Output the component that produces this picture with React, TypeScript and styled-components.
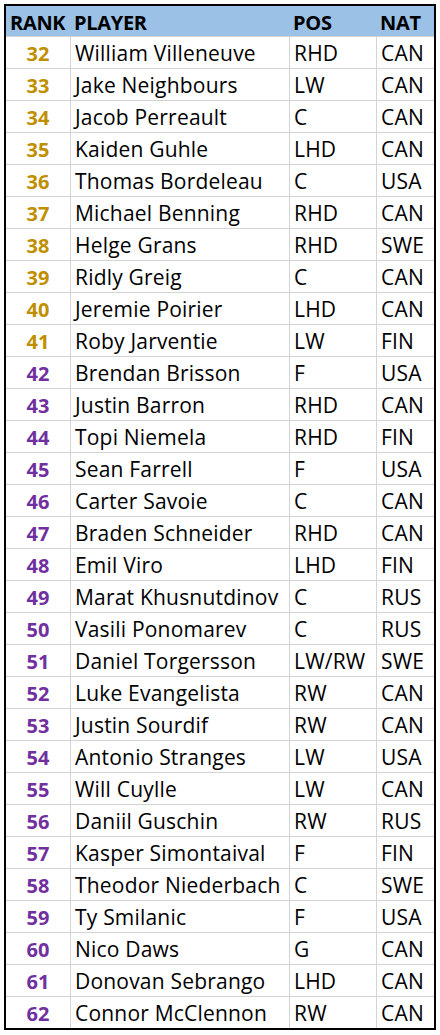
import React from 'react';
import styled, { createGlobalStyle } from 'styled-components';

const GlobalStyle = createGlobalStyle`
  html, body {
    margin: 0;
    padding: 0;
    background: #ffffff;
  }
  body {
    font-family: "Open Sans", "Liberation Sans", sans-serif;
  }
`;

// Excel-like sheet wrapper
const Page = styled.div`
  padding: 4px;
`;

const Sheet = styled.div`
  width: 428px;
  border: 2px solid #000;
`;

const Row = styled.div<{ header?: boolean }>`
  display: grid;
  grid-template-columns: 64px 219px 87px 58px;
  height: ${({ header }) => (header ? '30px' : '32px')};
  box-sizing: border-box;
  background: ${({ header }) => (header ? '#9bc2e6' : '#fff')};
  border-top: ${({ header }) => (header ? 'none' : '1px solid #d4d4d4')};
`;

const Cell = styled.div<{ divider?: boolean }>`
  box-sizing: border-box;
  display: flex;
  align-items: flex-end;
  padding: 0 0 4px 4px;
  border-left: ${({ divider }) => (divider ? '1px solid #d4d4d4' : 'none')};
  font-size: 21px;
  line-height: 1;
  letter-spacing: 0.2px;
  color: #000;
  white-space: nowrap;
  overflow: hidden;
`;

const RankCell = styled(Cell)<{ color: string }>`
  justify-content: center;
  padding-left: 0;
  font-size: 20px;
  font-weight: 700;
  letter-spacing: 0;
  color: ${({ color }) => color};
`;

const HeadCell = styled(Cell)`
  padding-bottom: 3px;
  font-size: 20px;
  font-weight: 700;
  letter-spacing: -0.3px;
`;

type Player = [number, string, string, string];

const players: Player[] = [
  [32, 'William Villeneuve', 'RHD', 'CAN'],
  [33, 'Jake Neighbours', 'LW', 'CAN'],
  [34, 'Jacob Perreault', 'C', 'CAN'],
  [35, 'Kaiden Guhle', 'LHD', 'CAN'],
  [36, 'Thomas Bordeleau', 'C', 'USA'],
  [37, 'Michael Benning', 'RHD', 'CAN'],
  [38, 'Helge Grans', 'RHD', 'SWE'],
  [39, 'Ridly Greig', 'C', 'CAN'],
  [40, 'Jeremie Poirier', 'LHD', 'CAN'],
  [41, 'Roby Jarventie', 'LW', 'FIN'],
  [42, 'Brendan Brisson', 'F', 'USA'],
  [43, 'Justin Barron', 'RHD', 'CAN'],
  [44, 'Topi Niemela', 'RHD', 'FIN'],
  [45, 'Sean Farrell', 'F', 'USA'],
  [46, 'Carter Savoie', 'C', 'CAN'],
  [47, 'Braden Schneider', 'RHD', 'CAN'],
  [48, 'Emil Viro', 'LHD', 'FIN'],
  [49, 'Marat Khusnutdinov', 'C', 'RUS'],
  [50, 'Vasili Ponomarev', 'C', 'RUS'],
  [51, 'Daniel Torgersson', 'LW/RW', 'SWE'],
  [52, 'Luke Evangelista', 'RW', 'CAN'],
  [53, 'Justin Sourdif', 'RW', 'CAN'],
  [54, 'Antonio Stranges', 'LW', 'USA'],
  [55, 'Will Cuylle', 'LW', 'CAN'],
  [56, 'Daniil Guschin', 'RW', 'RUS'],
  [57, 'Kasper Simontaival', 'F', 'FIN'],
  [58, 'Theodor Niederbach', 'C', 'SWE'],
  [59, 'Ty Smilanic', 'F', 'USA'],
  [60, 'Nico Daws', 'G', 'CAN'],
  [61, 'Donovan Sebrango', 'LHD', 'CAN'],
  [62, 'Connor McClennon', 'RW', 'CAN'],
];

const rankColor = (rank: number) => (rank <= 41 ? '#bf8f00' : '#7030a0');

const App: React.FC = () => (
  <Page>
    <GlobalStyle />
    <Sheet>
      <Row header>
        <HeadCell>RANK</HeadCell>
        <HeadCell>PLAYER</HeadCell>
        <HeadCell>POS</HeadCell>
        <HeadCell>NAT</HeadCell>
      </Row>
      {players.map(([rank, name, pos, nat]) => (
        <Row key={rank}>
          <RankCell color={rankColor(rank)}>{rank}</RankCell>
          <Cell divider>{name}</Cell>
          <Cell divider>{pos}</Cell>
          <Cell divider>{nat}</Cell>
        </Row>
      ))}
    </Sheet>
  </Page>
);

export default App;
